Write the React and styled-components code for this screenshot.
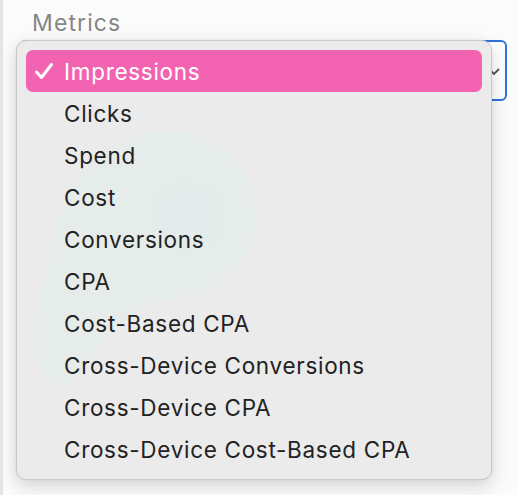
import styled, { createGlobalStyle } from "styled-components";

const Global = createGlobalStyle`
  html, body { margin: 0; padding: 0; background: #fff; }
  body { font-family: Inter, "Liberation Sans", Arial, sans-serif; }
`;

const metrics = [
  "Impressions",
  "Clicks",
  "Spend",
  "Cost",
  "Conversions",
  "CPA",
  "Cost-Based CPA",
  "Cross-Device Conversions",
  "Cross-Device CPA",
  "Cross-Device Cost-Based CPA",
];

const Page = styled.div`
  width: 517px;
  height: 495px;
  box-sizing: border-box;
  border-left: 3px solid #e1e4e9;
  background: #fbfbfb;
  padding: 9px 10px 0 13px;
  position: relative;
  overflow: hidden;
`;

const Label = styled.div`
  padding-left: 16px;
  font-size: 23px;
  line-height: 28px;
  letter-spacing: 1.1px;
  color: #868686;
`;

const Field = styled.div`
  position: relative;
  margin-top: 3px;
`;

const SelectBox = styled.div`
  height: 61px;
  box-sizing: border-box;
  margin-left: 4px;
  border: 2px solid #2a74da;
  border-radius: 6px;
  background: #fff;
  display: flex;
  align-items: center;
  justify-content: flex-end;
  padding-right: 4px;
`;

const Menu = styled.ul`
  position: absolute;
  top: 0;
  left: 0;
  width: 476px;
  height: 440px;
  box-sizing: border-box;
  margin: 0;
  padding: 9px 9px;
  list-style: none;
  background: #ebebeb;
  border: 1px solid #c9c9c9;
  border-radius: 10px;
  box-shadow: 0 6px 18px rgba(0, 0, 0, 0.16), 0 0 3px rgba(0, 0, 0, 0.06);
  overflow: hidden;
`;

const Blob = styled.svg`
  position: absolute;
  left: 10px;
  top: 70px;
  pointer-events: none;
`;

const Item = styled.li`
  position: relative;
  height: 42px;
  display: flex;
  align-items: center;
  padding-left: 38px;
  border-radius: 7px;
  font-size: 22.5px;
  letter-spacing: 0.7px;
  color: ${(p) => (p.$active ? "#fff" : "#222")};
  background: ${(p) => (p.$active ? "#f264b1" : "transparent")};
`;

const Check = styled.svg`
  position: absolute;
  left: 8px;
  top: 12px;
`;

export default function App() {
  return (
    <Page>
      <Global />
      <Label>Metrics</Label>
      <Field>
        <SelectBox>
          <svg width="14" height="14" viewBox="0 0 14 14">
            <path d="M2 5 L7 10 L12 5" fill="none" stroke="#555" strokeWidth="1.8" />
          </svg>
        </SelectBox>
        <Menu>
          <Blob width="250" height="290" viewBox="0 0 250 290">
            <path
              d="M70 45 C130 0 215 15 228 90 C238 150 195 180 140 188 C105 193 80 225 50 265 C25 292 -5 250 10 195 C22 150 28 80 70 45 Z"
              fill="#e3ecea"
              opacity="0.6"
            />
            <path d="M160 70 L195 85 L192 125 L160 140 L125 125 L128 85 Z" fill="#dfebea" opacity="0.5" />
          </Blob>
          {metrics.map((m, i) => (
            <Item key={m} $active={i === 0}>
              {i === 0 && (
                <Check width="20" height="18" viewBox="0 0 20 18">
                  <path
                    d="M2.5 10 L7.5 15.5 L17.5 2.5"
                    fill="none"
                    stroke="#fff"
                    strokeWidth="3"
                    strokeLinecap="round"
                    strokeLinejoin="round"
                  />
                </Check>
              )}
              {m}
            </Item>
          ))}
        </Menu>
      </Field>
    </Page>
  );
}
